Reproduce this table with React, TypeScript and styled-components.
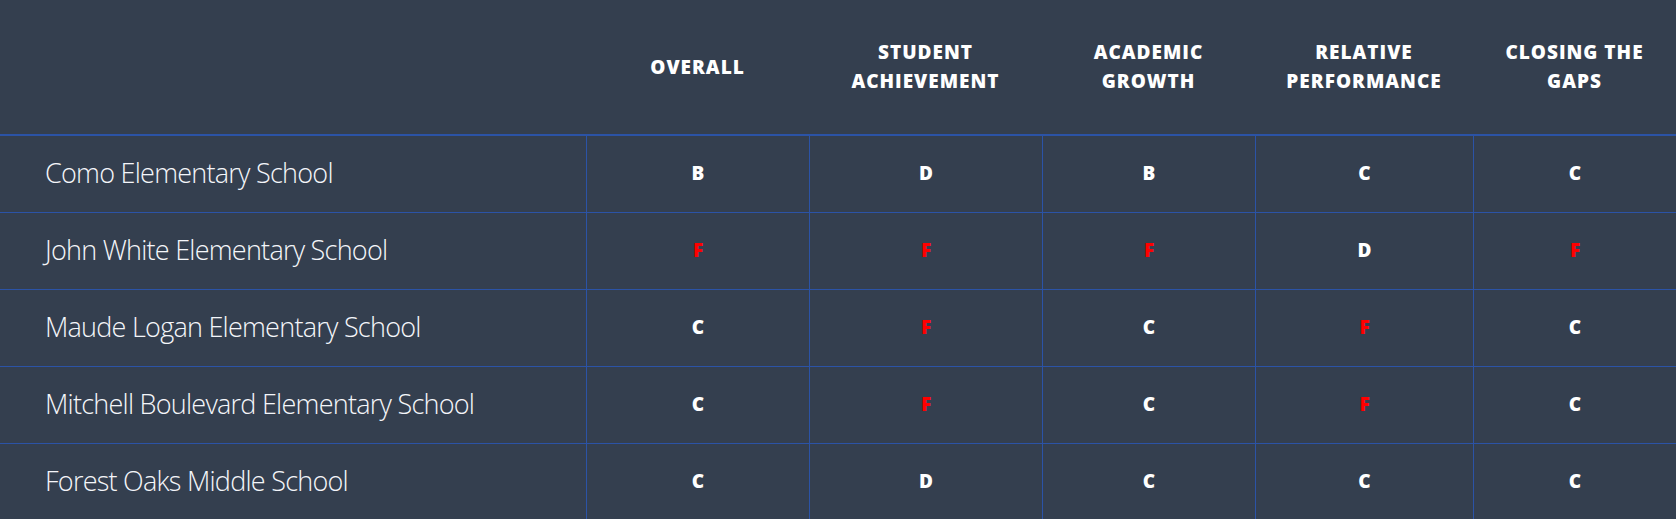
import {FC} from "react";
import styled, {createGlobalStyle} from "styled-components";

type Grade = "A" | "B" | "C" | "D" | "F";

interface SchoolRow {
    name: string
    grades: Grade[]
}

const columns = [
    {label: "Overall", width: 223},
    {label: "Student Achievement", width: 233},
    {label: "Academic Growth", width: 213},
    {label: "Relative Performance", width: 218},
    {label: "Closing the Gaps", width: 203},
];

const schools: SchoolRow[] = [
    {name: "Como Elementary School", grades: ["B", "D", "B", "C", "C"]},
    {name: "John White Elementary School", grades: ["F", "F", "F", "D", "F"]},
    {name: "Maude Logan Elementary School", grades: ["C", "F", "C", "F", "C"]},
    {name: "Mitchell Boulevard Elementary School", grades: ["C", "F", "C", "F", "C"]},
    {name: "Forest Oaks Middle School", grades: ["C", "D", "C", "C", "C"]},
];

const template = `586px ${columns.map(c => c.width + "px").join(" ")}`;

const GlobalStyle = createGlobalStyle`
    html, body {
        margin: 0;
        padding: 0;
        background: #343f4f;
    }
    body {
        font-family: "Open Sans", "Noto Sans", sans-serif;
        -webkit-font-smoothing: antialiased;
    }
`;

const Table = styled.div`
    width: 1676px;
    height: 519px;
    overflow: hidden;
    background: #343f4f;
    color: #ffffff;
`;

const HeaderRow = styled.div`
    display: grid;
    grid-template-columns: ${template};
    height: 134px;
    border-bottom: 2px solid #2b53a6;
`;

const HeaderCell = styled.div`
    display: flex;
    align-items: center;
    justify-content: center;
    text-align: center;
    padding: 0 12px;
    font-size: 19px;
    font-weight: 800;
    line-height: 29px;
    letter-spacing: 1px;
    text-transform: uppercase;
`;

const Row = styled.div`
    display: grid;
    grid-template-columns: ${template};
    height: 76px;
    border-bottom: 1px solid #2b53a6;
`;

const NameCell = styled.div`
    display: flex;
    align-items: center;
    padding: 0 0 3px 45px;
    font-size: 27px;
    font-weight: 300;
    letter-spacing: -0.75px;
    color: #f4f6fa;
`;

const GradeCell = styled.div<{ $fail: boolean }>`
    display: flex;
    align-items: center;
    justify-content: center;
    padding-bottom: 2px;
    border-left: 1px solid #2b53a6;
    font-size: 19px;
    font-weight: 800;
    color: ${p => p.$fail ? "#ff0000" : "#ffffff"};
`;

const App: FC = () => {
    return (
        <>
            <GlobalStyle/>
            <Table>
                <HeaderRow>
                    <HeaderCell/>
                    {columns.map(c => (
                        <HeaderCell key={c.label}>{c.label}</HeaderCell>
                    ))}
                </HeaderRow>
                {schools.map(school => (
                    <Row key={school.name}>
                        <NameCell>{school.name}</NameCell>
                        {school.grades.map((g, i) => (
                            <GradeCell key={i} $fail={g === "F"}>{g}</GradeCell>
                        ))}
                    </Row>
                ))}
            </Table>
        </>
    );
};

export default App;
